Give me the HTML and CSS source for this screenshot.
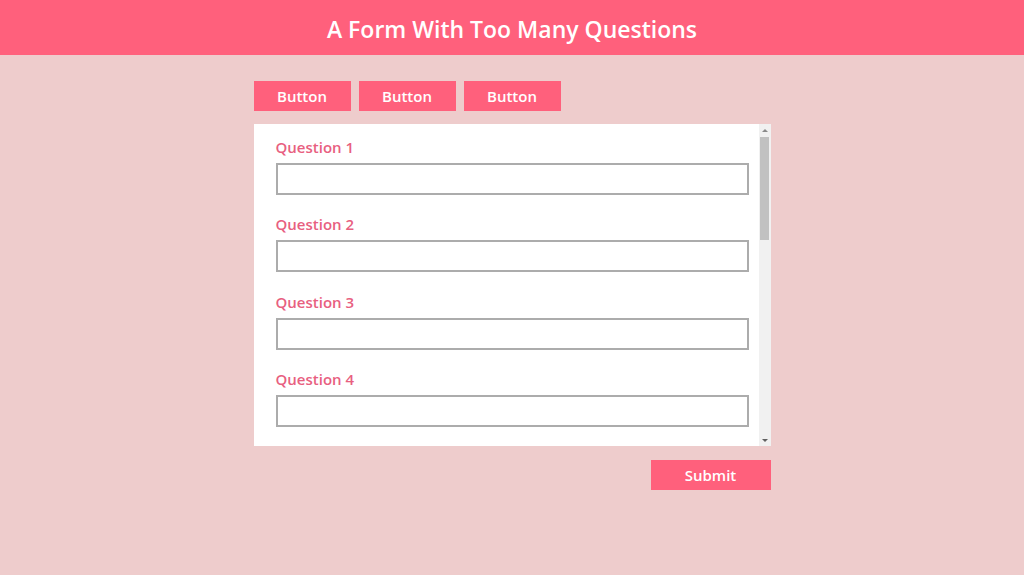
FILE: index.html
```html
<!DOCTYPE html>
<html lang="en">
<head>
    <meta charset="UTF-8">
    <meta name="viewport" content="width=device-width, initial-scale=1.0">
    <title>A Form With Too Many Questions</title>
    <link rel="stylesheet" href="styles.css">
</head>
<body>
    <header class="header">
        <h1>A Form With Too Many Questions</h1>
    </header>

    <main class="page">
        <div class="toolbar">
            <button class="btn">Button</button>
            <button class="btn">Button</button>
            <button class="btn">Button</button>
        </div>

        <div class="panel">
            <form class="questions" id="questions">
                <div class="question">
                    <label for="q1">Question 1</label>
                    <input type="text" id="q1">
                </div>
                <div class="question">
                    <label for="q2">Question 2</label>
                    <input type="text" id="q2">
                </div>
                <div class="question">
                    <label for="q3">Question 3</label>
                    <input type="text" id="q3">
                </div>
                <div class="question">
                    <label for="q4">Question 4</label>
                    <input type="text" id="q4">
                </div>
                <div class="question">
                    <label for="q5">Question 5</label>
                    <input type="text" id="q5">
                </div>
                <div class="question">
                    <label for="q6">Question 6</label>
                    <input type="text" id="q6">
                </div>
                <div class="question">
                    <label for="q7">Question 7</label>
                    <input type="text" id="q7">
                </div>
                <div class="question">
                    <label for="q8">Question 8</label>
                    <input type="text" id="q8">
                </div>
                <div class="question">
                    <label for="q9">Question 9</label>
                    <input type="text" id="q9">
                </div>
                <div class="question">
                    <label for="q10">Question 10</label>
                    <input type="text" id="q10">
                </div>
                <div class="question">
                    <label for="q11">Question 11</label>
                    <input type="text" id="q11">
                </div>
                <div class="question">
                    <label for="q12">Question 12</label>
                    <input type="text" id="q12">
                </div>
            </form>
            <div class="scrollbar">
                <span class="arrow up"></span>
                <div class="track">
                    <div class="thumb"></div>
                </div>
                <span class="arrow down"></span>
            </div>
        </div>

        <div class="actions">
            <button class="btn submit" type="submit" form="questions">Submit</button>
        </div>
    </main>
</body>
</html>
```

FILE: styles.css
```css
body {
    font-family: "Open Sans", "Noto Sans", sans-serif;
    margin: 0;
    padding: 0;
    height: 100vh;
    background-color: #eecccc;
}

.header {
    background-color: #ff607c;
    height: 55px;
    box-sizing: border-box;
    padding-top: 3px;
    display: flex;
    align-items: center;
    justify-content: center;
}

.header h1 {
    margin: 0;
    color: white;
    font-size: 23px;
    font-weight: 600;
}

.page {
    width: 517px;
    margin: 0 auto;
    padding-top: 26px;
}

.toolbar {
    display: flex;
    gap: 8px;
    margin-bottom: 13px;
}

.btn {
    height: 30px;
    width: 97px;
    padding: 0;
    border: none;
    background-color: #ff607c;
    color: white;
    font-family: inherit;
    font-size: 15px;
    font-weight: 600;
    cursor: pointer;
}

.btn:hover {
    background-color: #f04d6b;
}

.panel {
    display: flex;
    height: 322px;
    background: white;
}

.questions {
    flex: 1;
    overflow-y: auto;
    scrollbar-width: none;
    padding: 13px 10px 20px 22px;
}

.question {
    margin-bottom: 19.33px;
}

.question label {
    display: block;
    height: 20px;
    line-height: 20px;
    margin-bottom: 6px;
    color: #e8607f;
    font-size: 15px;
    font-weight: 600;
}

.question input {
    display: block;
    width: 100%;
    height: 32px;
    box-sizing: border-box;
    border: 2px solid #acacac;
    padding: 4px 8px;
    font-family: inherit;
    font-size: 14px;
    outline: none;
}

.question input:focus {
    border-color: #ff607c;
}

/* drawn scrollbar, the real one is hidden in the capture */
.scrollbar {
    width: 12px;
    background: #f1f1f1;
    display: flex;
    flex-direction: column;
}

.arrow {
    height: 12px;
    display: flex;
    align-items: center;
    justify-content: center;
}

.arrow::before {
    content: "";
    border-left: 3px solid transparent;
    border-right: 3px solid transparent;
}

.arrow.up::before {
    border-bottom: 3px solid #8a8a8a;
}

.arrow.down::before {
    border-top: 3px solid #606060;
}

.track {
    flex: 1;
    padding-top: 1px;
}

.thumb {
    height: 103px;
    margin: 0 2px 0 1px;
    background: #c1c1c1;
}

.actions {
    display: flex;
    justify-content: flex-end;
    margin-top: 14px;
}

.submit {
    width: 120px;
}
```
